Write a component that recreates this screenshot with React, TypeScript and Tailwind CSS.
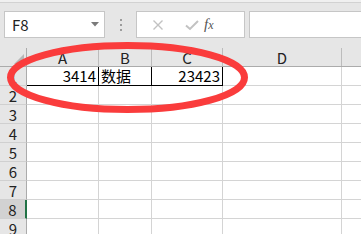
const cols = [
  { label: 'A', w: 'w-[72px]' },
  { label: 'B', w: 'w-[53px]' },
  { label: 'C', w: 'w-[71px]' },
  { label: 'D', w: 'w-[119px]' },
];

const font = "font-['Noto_Sans_CJK_SC','Noto_Sans',sans-serif]";

const Toolbar = () => (
  <div className="h-[48px] bg-[#e6e6e6] flex flex-col">
    <div className="h-[2px] bg-[#f0f0f0] border-b border-[#d2d2d2] box-content" />
    <div className="flex items-start pt-[8px] pl-[4px]">
      {/* name box */}
      <div className="w-[101px] h-[27px] bg-white border border-[#c6c6c6] flex items-center pl-[7px] pr-[5px]">
        <span className={`${font} text-[15px] text-[#222] flex-1 leading-none`}>F8</span>
        <svg width="8" height="5" viewBox="0 0 8 5">
          <path d="M0 0 H8 L4 4.5 Z" fill="#7a7a7a" />
        </svg>
      </div>
      {/* splitter dots */}
      <div className="w-[31px] h-[27px] flex flex-col items-center justify-center gap-[3px]">
        <span className="w-[2px] h-[2px] bg-[#9c9c9c]" />
        <span className="w-[2px] h-[2px] bg-[#9c9c9c]" />
        <span className="w-[2px] h-[2px] bg-[#9c9c9c]" />
      </div>
      {/* cancel / enter / fx */}
      <div className="w-[109px] h-[27px] bg-white border border-[#c6c6c6] flex items-center pl-[15px]">
        <svg width="12" height="12" viewBox="0 0 12 12">
          <path d="M1.5 1.5 L10.5 10.5 M10.5 1.5 L1.5 10.5" stroke="#c2c2c2" strokeWidth="1.4" />
        </svg>
        <svg width="14" height="12" viewBox="0 0 14 12" className="ml-[21px]">
          <path d="M1 6.5 L5 10 L13 2" stroke="#c2c2c2" strokeWidth="2" fill="none" />
        </svg>
        <span className="ml-[5px] font-['Liberation_Serif',serif] italic text-[15px] text-[#555] leading-none">
          f<span className="text-[12px]">x</span>
        </span>
      </div>
      <div className="ml-[4px] flex-1 h-[27px] bg-white border border-[#c6c6c6] border-r-0" />
    </div>
  </div>
);

const Cell = ({ w, className = '', children }: { w: string; className?: string; children?: React.ReactNode }) => (
  <div className={`${w} shrink-0 h-[19px] border-r border-b border-[#d4d4d4] flex items-end px-[2px] ${font} text-[15px] leading-[18px] text-black ${className}`}>
    {children}
  </div>
);

const App = () => {
  const rows = [1, 2, 3, 4, 5, 6, 7, 8, 9];
  return (
    <div className="w-[361px] h-[234px] overflow-hidden bg-white relative">
      <Toolbar />
      {/* column headers */}
      <div className="flex h-[19px] bg-[#e6e6e6] border-b border-[#ababab]">
        <div className="w-[27px] shrink-0 border-r border-[#ababab] relative">
          <svg width="10" height="10" viewBox="0 0 10 10" className="absolute right-[2px] bottom-[2px]">
            <path d="M10 0 V10 H0 Z" fill="#b6b6b6" />
          </svg>
        </div>
        {cols.map((c) => (
          <div key={c.label} className={`${c.w} shrink-0 border-r border-[#bcbcbc] flex items-center justify-center ${font} text-[15px] text-[#222] leading-none pt-[1px]`}>
            {c.label}
          </div>
        ))}
        <div className="flex-1" />
      </div>
      {rows.map((r) => (
        <div key={r} className="flex">
          <div
            className={`w-[27px] shrink-0 h-[19px] border-b border-[#d0d0d0] flex items-center justify-center ${font} text-[15px] leading-none text-[#222] ${
              r === 8 ? 'bg-[#d2d2d2] border-r-2 border-r-[#217346]' : 'bg-[#e6e6e6] border-r border-r-[#ababab]'
            }`}
          >
            {r}
          </div>
          {r === 1 ? (
            <>
              <Cell w="w-[72px]" className="justify-end border-r-black border-b-black">3414</Cell>
              <Cell w="w-[53px]" className="border-r-black border-b-black">数据</Cell>
              <Cell w="w-[71px]" className="justify-end border-r-black border-b-black">23423</Cell>
            </>
          ) : (
            <>
              <Cell w="w-[72px]" />
              <Cell w="w-[53px]" />
              <Cell w="w-[71px]" />
            </>
          )}
          <Cell w="w-[119px]" />
          <Cell w="flex-1" className="border-r-0" />
        </div>
      ))}
      {/* red annotation circle */}
      <svg className="absolute left-0 top-0 pointer-events-none" width="361" height="234">
        <ellipse cx="127.5" cy="77.5" rx="117" ry="32" fill="none" stroke="#fa3c3c" strokeWidth="7" />
      </svg>
    </div>
  );
};

export default App;
